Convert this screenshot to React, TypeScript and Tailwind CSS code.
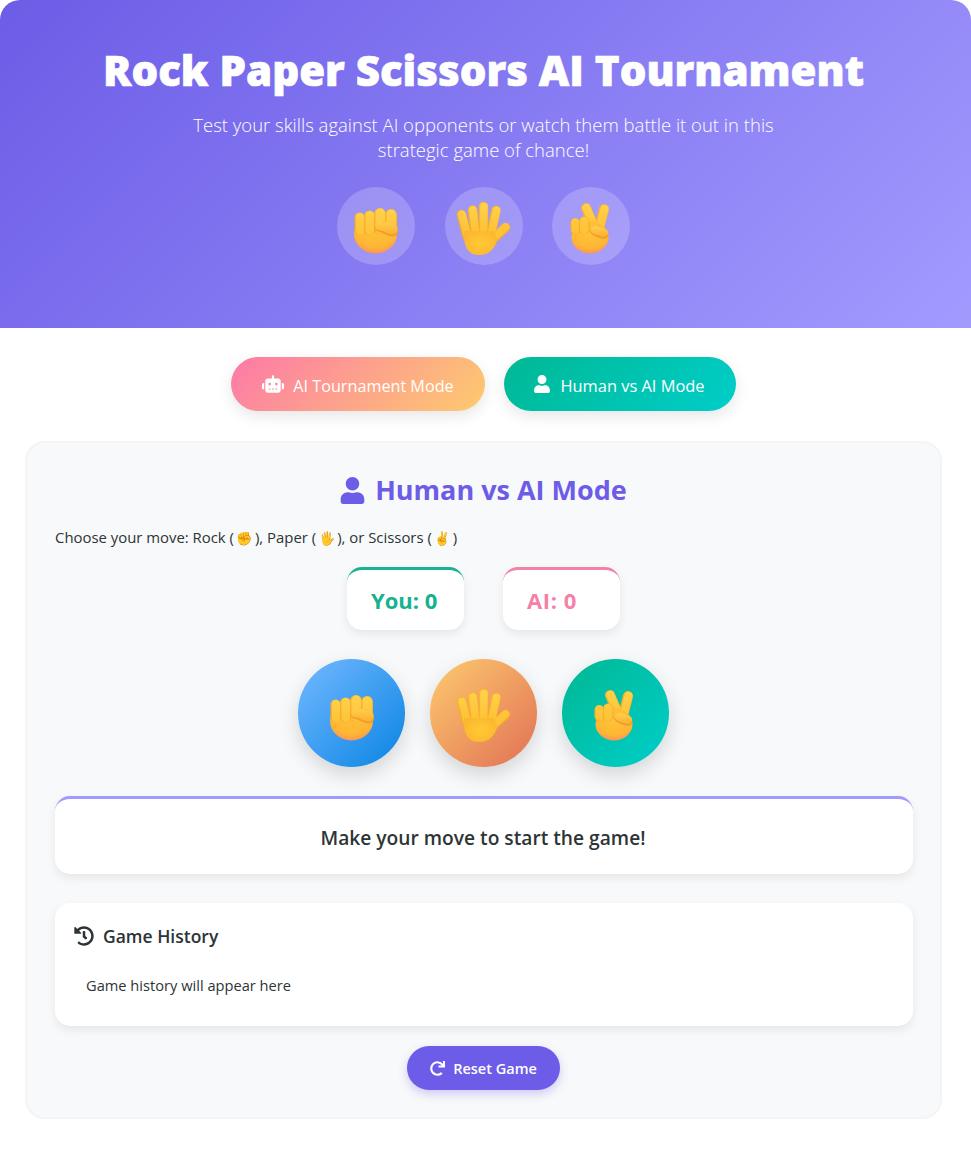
import { FaUser, FaHistory, FaRedo } from 'react-icons/fa'
import { FaRobot } from 'react-icons/fa6'

const font = "font-['Open_Sans','Noto_Sans',sans-serif]"

// shared gradients for the 3D hand drawings
function HandDefs() {
  return (
    <defs>
      <linearGradient id="finger" x1="0" y1="0" x2="0" y2="50" gradientUnits="userSpaceOnUse">
        <stop offset="0" stopColor="#ffd650" />
        <stop offset="0.55" stopColor="#fec53a" />
        <stop offset="1" stopColor="#fdc033" />
      </linearGradient>
      <linearGradient id="fingerEdge" x1="0" y1="0" x2="0" y2="50" gradientUnits="userSpaceOnUse">
        <stop offset="0" stopColor="#fab730" />
        <stop offset="1" stopColor="#f5a529" />
      </linearGradient>
      <linearGradient id="thumb" x1="0" y1="0" x2="0" y2="1">
        <stop offset="0" stopColor="#ffd04c" />
        <stop offset="1" stopColor="#fbb02f" />
      </linearGradient>
      <radialGradient id="palm" cx="0.5" cy="0.3" r="0.75">
        <stop offset="0" stopColor="#ffc53a" />
        <stop offset="0.72" stopColor="#fdb634" />
        <stop offset="1" stopColor="#fb8a62" />
      </radialGradient>
      <radialGradient id="palmYellow" cx="0.5" cy="0.5" r="0.65">
        <stop offset="0" stopColor="#ffca35" />
        <stop offset="1" stopColor="#fcb42e" />
      </radialGradient>
    </defs>
  )
}

function Fist() {
  return (
    <svg width="64" height="60" viewBox="0 -7 64 60" className="shrink-0">
      <HandDefs />
      <ellipse cx="31.5" cy="31" rx="21.5" ry="19.5" fill="url(#palm)" />
      <g fill="url(#fingerEdge)">
        <rect x="10.5" y="9.5" width="10" height="23" rx="5" />
        <rect x="20" y="7.5" width="11" height="25" rx="5.5" />
        <rect x="30" y="5" width="12" height="27" rx="6" />
        <rect x="41" y="6" width="12" height="27" rx="6" />
      </g>
      <g fill="url(#finger)">
        <rect x="12" y="10" width="8" height="22" rx="4" />
        <rect x="21.5" y="8" width="8.5" height="24" rx="4.2" />
        <rect x="31.5" y="5.5" width="9.5" height="26" rx="4.7" />
        <rect x="42.5" y="6.5" width="9.5" height="26" rx="4.7" />
      </g>
      <path d="M30.5 24Q30.5 17.5 37 18L47 19.5Q54 20.5 54 27Q54 34 48 33.5Q43 33 39 30Q30.5 29 30.5 24Z" fill="#f29d28" />
      <path d="M31 23.5Q31 17.5 37 18L47 19.5Q53.5 20.5 53.5 26.5Q53 31.5 48 31.5Q43 31 39 28Q31 27.5 31 23.5Z" fill="url(#thumb)" />
    </svg>
  )
}

function Paper() {
  return (
    <svg width="67" height="60" viewBox="0 -2 67 60" className="shrink-0">
      <HandDefs />
      <g stroke="url(#fingerEdge)" strokeWidth="9.5" strokeLinecap="round" fill="none">
        <path d="M11.5 16.5L17 38" />
        <path d="M22.5 12L25 35" />
        <path d="M33.5 8.5L33 35" />
        <path d="M46 12.5L41 35" />
        <path d="M55.5 29.5L42 42" />
      </g>
      <g stroke="url(#finger)" strokeWidth="7.5" strokeLinecap="round" fill="none">
        <path d="M12 16.5L17.5 38" />
        <path d="M23 12L25.5 35" />
        <path d="M34 8.5L33.5 35" />
        <path d="M46.5 12.5L41.5 35" />
        <path d="M55.5 29L42 41.5" />
      </g>
      <path d="M14 33L44 33L47 42Q43 57 29 57Q17 57 14.5 44Z" fill="url(#palmYellow)" />
    </svg>
  )
}

function Scissors() {
  return (
    <svg width="71" height="60" viewBox="0 -2 71 60" className="shrink-0">
      <HandDefs />
      <g stroke="url(#fingerEdge)" strokeWidth="10" strokeLinecap="round" fill="none">
        <path d="M30 10L39 31" />
        <path d="M48 11L43 31" />
      </g>
      <g stroke="url(#finger)" strokeWidth="8" strokeLinecap="round" fill="none">
        <path d="M30.5 10L39.5 31" />
        <path d="M48.5 11L43.5 31" />
      </g>
      <ellipse cx="34" cy="39.5" rx="18.5" ry="16" fill="url(#palm)" />
      <g fill="url(#fingerEdge)">
        <rect x="14.5" y="20" width="9.5" height="16" rx="4.7" />
        <rect x="23" y="18.5" width="10.5" height="18" rx="5" />
      </g>
      <g fill="url(#finger)">
        <rect x="15.5" y="20.5" width="7.5" height="15" rx="3.7" />
        <rect x="24" y="19" width="8.5" height="17" rx="4.2" />
      </g>
      <path d="M33.5 33Q34 27.5 40 28Q52.5 29.5 52.5 36Q52 42 46 40.5Q36 38.5 33.5 33Z" fill="#f29d28" />
      <path d="M34 32.5Q34.5 27.5 40 28Q52 29.5 52 35Q51.5 39.5 46 38.5Q37 37 34 32.5Z" fill="url(#thumb)" />
    </svg>
  )
}

const choices = [
  { name: 'rock', Icon: Fist, bg: 'bg-[linear-gradient(135deg,#74b9ff,#0984e3)]' },
  { name: 'paper', Icon: Paper, bg: 'bg-[linear-gradient(135deg,#fdcb6e,#e17055)]' },
  { name: 'scissors', Icon: Scissors, bg: 'bg-[linear-gradient(135deg,#00b894,#00cec9)]' },
]

function SmallEmoji({ children }: { children: string }) {
  return <span className="mx-[2.5px] text-[13px]">{children}</span>
}

export default function App() {
  return (
    <div className={`${font} min-h-[1174px] bg-white text-[#2d3436]`}>
      <header className="flex h-[328px] flex-col items-center rounded-t-[20px] bg-[linear-gradient(135deg,#6c5ce7,#a29bfe)] pt-[40px] pr-[4px] text-white">
        <h1 className="text-[42px] leading-[60px] font-extrabold [-webkit-text-stroke:0.7px_white]">Rock Paper Scissors AI Tournament</h1>
        <p className="mt-[12px] w-[600px] text-center text-[18.5px] leading-[25px] font-light">
          Test your skills against AI opponents or watch them battle it out in this strategic game of chance!
        </p>
        <div className="mt-[25px] flex gap-[29.5px]">
          {choices.map(({ name, Icon }) => (
            <div key={name} className="flex h-[78px] w-[78px] items-center justify-center overflow-hidden rounded-full bg-white/20">
              <Icon />
            </div>
          ))}
        </div>
      </header>

      <main className="pt-[29px] pr-[29px] pl-[25px]">
        <div className="flex justify-center gap-[19px]">
          <button className="flex h-[54px] w-[254px] items-center justify-center gap-[9px] rounded-full bg-[linear-gradient(135deg,#fd79a8,#fdcb6e)] text-[16.2px] text-white shadow-[0_5px_15px_rgba(0,0,0,0.1)]">
            <FaRobot size={22} /> <span className="mt-[5px]">AI Tournament Mode</span>
          </button>
          <button className="flex h-[54px] w-[232px] items-center justify-center gap-[9px] rounded-full bg-[linear-gradient(135deg,#00b894,#00cec9)] pr-[2px] text-[16.4px] text-white shadow-[0_5px_15px_rgba(0,0,0,0.1)]">
            <FaUser size={18} /> <span className="mt-[5px]">Human vs AI Mode</span>
          </button>
        </div>

        <section className="mt-[30px] h-[678px] rounded-[20px] border-2 border-[#f3f4f5] bg-[#f8f9fa] pt-[28px] pr-[27px] pl-[28px]">
          <h2 className="flex items-center justify-center gap-[9px] pr-[2px] text-[27px] leading-[38px] font-bold text-[#6c5ce7]">
            <FaUser size={27} /> Human vs AI Mode
          </h2>
          <p className="mt-[17px] text-[14.9px] leading-[22px]">
            Choose your move: Rock (<SmallEmoji>✊</SmallEmoji>), Paper (<SmallEmoji>🖐️</SmallEmoji>), or Scissors (<SmallEmoji>✌️</SmallEmoji>)
          </p>

          <div className="mt-[18px] flex justify-center gap-[39px] pr-[1px]">
            <div className="flex h-[63px] w-[117px] items-center rounded-[15px] border-t-[3px] border-[#1bb194] bg-white pl-[24px] text-[22px] font-bold text-[#14b291] shadow-[0_4px_10px_rgba(0,0,0,0.08)]">You: 0</div>
            <div className="flex h-[63px] w-[117px] items-center rounded-[15px] border-t-[3px] border-[#f183a8] bg-white pl-[24px] text-[22px] font-bold tracking-[0.6px] text-[#f580a8] shadow-[0_4px_10px_rgba(0,0,0,0.08)]">AI: 0</div>
          </div>

          <div className="mt-[29px] flex justify-center gap-[24.4px] pr-[1px]">
            {choices.map(({ name, Icon, bg }) => (
              <button key={name} aria-label={name} className={`flex h-[108px] w-[107.6px] items-center justify-center rounded-full shadow-[0_8px_20px_rgba(0,0,0,0.15)] ${bg}`}>
                <Icon />
              </button>
            ))}
          </div>

          <div className="mt-[29px] flex h-[78px] items-center justify-center rounded-[15px] border-t-[3px] border-[#a29bfe] bg-white pt-[4px] pr-[2px] text-[19.2px] font-semibold shadow-[0_4px_10px_rgba(0,0,0,0.08)]">
            Make your move to start the game!
          </div>

          <div className="mt-[29px] h-[123px] rounded-[15px] bg-white px-[19px] pt-[20px] shadow-[0_4px_10px_rgba(0,0,0,0.08)]">
            <h3 className="flex items-center gap-[9px] text-[17.5px] leading-[26px] font-semibold">
              <FaHistory size={20} /> Game History
            </h3>
            <p className="mt-[25px] pl-[12px] text-[14.65px] leading-[22px]">Game history will appear here</p>
          </div>

          <div className="mt-[20px] flex justify-center pr-[1px]">
            <button className="flex h-[44px] w-[153px] items-center justify-center gap-[8px] rounded-full bg-[#6c5ce7] text-[14.5px] font-semibold text-white shadow-[0_4px_10px_rgba(108,92,231,0.3)]">
              <FaRedo size={15} /> <span className="mt-[2px]">Reset Game</span>
            </button>
          </div>
        </section>
      </main>
    </div>
  )
}
